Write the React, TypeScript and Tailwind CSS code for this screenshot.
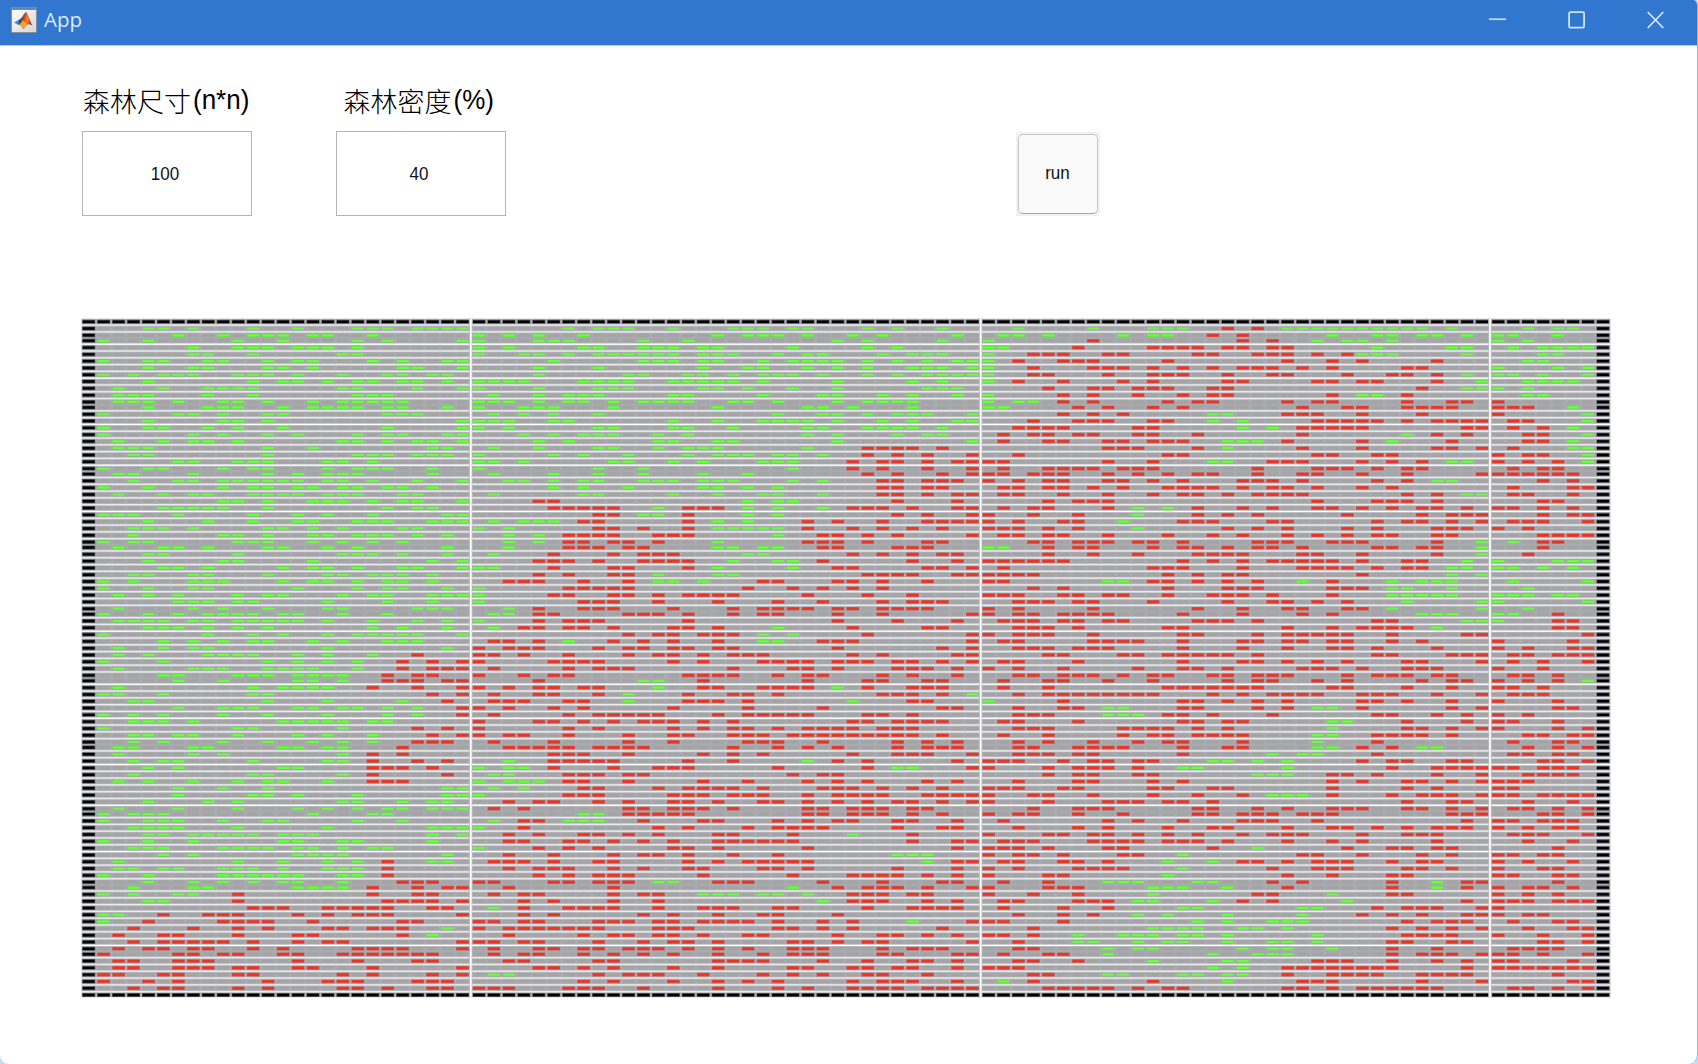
import React from "react";

/*
 * Forest rows. Each row holds four blocks of columns; every character is a
 * base-36 column index inside its block. A block starts with living trees
 * (green) and "/" switches between living and burning (red).
 */
const ROWS: string[] = [
  "457beijkmnop|689adhijlmqsv|27bcd/gi/klmnopqrstv|245",
  "69bcdfgj|0247gijkmprw|1249bc/fh/nqrtuw|014",
  "14adikp|0456beoqv|0/7hj/mopr|02",
  "7abcefgi|0278bcdfglqs|01/6bcdeghjk/qvw|13456",
  "78bhi|034689abcdfghkmnrtuv|0/34589efijkmo/pqrw|34",
  "14589cefjlop|5bcdfgjlmnoqsuwx|0/2567cknpu|23",
  "478cdflmp|48fijmoqtuvx|0/3789bdfhijlnst|046",
  "13567abcehklno|4abefhjklnqsuvwx|0/348bcdgjkorsu/w|0136",
  "4bdegijlmo|0123789adefghjotv|0/259bghmnpqu/x|2345",
  "2589abhimp|0489afgilouvw|/478abcfgt/wx|02",
  "2348bijk|14678dejnortw|0/57adfgn/pq/s|23",
  "23469acfhijkl|0124679bcdehikoqrst|023/57cefkmnsvw|/0",
  "489adfghiklo|03459gmnpt|01/68bdlopstuv|/012/5",
  "1679cdklm|1358knoqstux|/579/fg/klmpt|/0/6",
  "49acp|01256dgjklmortwx|/3678bc/fh/mnopqsuvwx|/12/6",
  "1458adkp|0289dehmnqrstv|/2345ab/hj/lmnopwx|/13/5",
  "179ceiklop|35789cemosuv|/13467abel/s/uw|/23/6",
  "2578ahikmnp|46cdghox|/14589bcd/ghi/kp/r/v|/23/5",
  "234cfno|1489cefgm/qrstv|/89ae/g/lpuvx|/1/56",
  "34cijkmno|057aeghikln/qsux|/2cdmnqr|/023/6",
  "67abcghj|0139adfjkl/prsuwx|/018b/fg/jklprt/vw|/024/6",
  "1459bcgijkn|08bl/prux|/145679abimnoqst|/134",
  "237ceghin|158bfi/qsvx|/013458acefilmpsx|/012345",
  "3679abcdeghjmp|23578bcdfghln/rsuvw|/024589bdhijlqs/uv|/35",
  "149bcefhikln|57afgik/rsuv|/124579cdefhjkmpr|/156",
  "2578bcdeghilm|178dgjkn/rsuwx|/1258bdegijklsu/wx|/125",
  "9acfghjlmp|/45/ikl/sw|/4678mqrsu|/34",
  "56789ckmn|/56789/c/efg/ikn/pqrtwx|/1348/ac/ehjmnprtuw|/0135",
  "1236begjop|/89/bc/e/ik/sux|/036/a/egiotvwx|/356",
  "48befijknop|1345/78e/gi/moruvwx|/0256/9/defjkqstvx|/1236",
  "3457cdfhlm|02/89be/ghijk/mprtv|/01246/a/gikoquvw|/02",
  "39acfgijkmo|24/6789cde/k/noqsx|/12458cfhkmoqruv|/3456",
  "134abcfhjl|24/679ac/g/mnoquv|/34678abdijknopu/x|1/34",
  "2568cdgio|2/678ab/ghjk/nostu|01/467bdegijlqrtu/x|/3",
  "45ahijlo|1/59bcd/ij/prtvw|/47aefghlmpu/x|/2",
  "49afnp|/4568bcde/hkl/ntw|/012345dfhjklmnpst/w|0456",
  "568dfgilmp|01/59ae/gl/opuvx|/1bcdhlmnoqst/vw|0135",
  "3478cghjkln|/469a/cgh/qrstwx|/0123ceghp/vx|",
  "13789dfgikln|/2347a/cdf/jkopru|/01/89/bcegi/l/n/rtuv|16",
  "1478eiklo|0/6789ailnpr|/35cghinop/rsv|2",
  "246acdhjknop|0/569acefghmqt|/0125689cfghjn/rstuv|01245",
  "678abgkn|0/789cgknrtuv|/23467bgjkmo/sx|06",
  "279cghmno|2/4789dhjklmoprstu|/027ehklop/rx|2",
  "14689abdehk|12/45abcehjkorx|/0235678dhln/tuv|01/4",
  "234578abcdegjmo|0/4678eosw|/1235689efgiqr/wx|0/45",
  "4568acjlo|1/34679deg/k/puv|/2346cdknpqrs/u|/45",
  "18bdgijklmp|/acdfgh/jl/qx|/02347deiklmnorwx|/6",
  "579bcfhklm|/124/6/9bdg/jk/nopx|/12789adhiklnort|/05",
  "2578go|/02348abdeghovx|/234678dhknoqu|/0256",
  "2489abegj/m|/0136acdfhijprwx|/459acdefgiqrvwx|/12456",
  "15cegi/lnp|/05678dfjklmopqstvx|/126dhikmostx|/136",
  "2789cdefi/lnop|/1689ahlmostuw|/025adeglmnpstu|/03",
  "56abcefgh/kmn|/0356efghkmnrtw|/235679bcfgijkoqrsuv|/124",
  "69efh/klmop|/4/bc/fmqruv|/1458bgijmotvw|/024/6",
  "2bdefg/jmp|/024578/c/fgjklm/o/qtuv|/14cdefghinosv|/013",
  "125bc/np|/1458/a/ehikrstv/x|/2456789abfhjklmpqrux|/123",
  "34cgl/o|/12367/a/efgi/p/tu|0/5degikpqsv|/04",
  "69abefhikm/p|/0257dinvw|/256/89/deik/mn/pvx|/45",
  "1359cgkm/p|/1689abcgijklmqrt|/234/89a/cdfjqruw|/02",
  "3457defghjk|/04579bcdfhpqstuv|/126degh/no/sw|/014",
  "1abh/mo|/068dfhikmnoprst|/2349abceg/n/stvx|/046",
  "3467aegj/np|/0236adehijlmnopqrstv|/149bcefgh/mn/qrstv|/2356",
  "359cfhj/mno|/15adijknsuw|/247acdh/m/q|/145",
  "2378degh/l|/2345689abhkmosuvw|/236789dgh/mn/pr/tu|/246",
  "279h/jl|/567afhjpstux|/23467d/jlm/q|/1245",
  "356bgh/jmo|2/56789eh/m/oqw|/012578ab/fgik/prsvw|/346",
  "46de/jkln|023/59cdekq/st/x|/04678a/dek/ruvwx|/01345",
  "3bch/jo|12/678ablno|/467ab/ijk/noqux|/2345",
  "247acdg/jkl|0234/67afimoquw|/267bdnpstvx|/012",
  "69cop|13/78cefghjnoprtv|/01256bcfgnsu|/01",
  "6bceiop|0/678defhijmopqruvwx|/0347beh/jkl/nrtuvx|/013456",
  "48ahilno|/2458adegjkmoqstvx|/0489acdfsvw|/25",
  "26aegiklnop|/13abdefhmnpqrtu|/3678efiknopstvx|/1246",
  "1345fjk|78/abcdemnpqrtv|/02369efhijlmnvwx|/346",
  "14569cdil|1/34/678/bfgkmopstw|/18adhijmw|/01345",
  "3456agnop|0/3ceiklmnsvw|/268cfgknoqsuvw|/0245",
  "45789abdefnp|/2478acghl/p/t|/04578acehjklpstu|/1236",
  "147dehin|/23679bdghijkltwx|/123789acdegknpu|/25",
  "3459abcefhjk|0/468degmw|/012489f/i/orsuv|/4",
  "57efgho|/259bcehk/stu|/02359a/d/lmptv|/0134",
  "2adgi/k/no|/123589egijklm/u/wx|/12568/cf/hikmnortu|/025",
  "23569abdghi/k|/24569befjkmsw|/026789/d/jmnostv|/034",
  "149abcdehi/k|/4689aflpqrsuw|/045/c/knrs|/0145",
  "479bdeh/lmn|/015689a/cd/ghinrvw|/14/89aef/jlr/u/wx|/4",
  "378efgh/jmop|/29/l/oqrsux|/0456/bcdg/kr/u/w|/0235",
  "1367/ajmn|/1349bc/fghjkm/pqrtu|/036/b/ij/n/rs|/024",
  "45/aklmnp|/359c/n/pqruw|/12678/abf/hj/o/w|/012456",
  "/bcdghijkno|1/36789cfghklqtuvw|/158/delm/qstux|/0",
  "12/589aegijkp|/35bdgjko|/257/acgl/prtwx|/023",
  "1/49abcflm|/013489acdfghiknp/t/x|/015/egjkl/suvw|/145",
  "/37acghjkl/o|/02345678cdeklnpv|/3/bcdehik/rtvx|/256",
  "/256aefl/n|/279acdfijorsuw|/013/69abdegm/stuv|/036",
  "/356789beghp|/01348bdeglmoqrx|/2/67acdgjkm/rsvw|/346",
  "/24578bdijklp|/14578abcegilmnrtuv|/23/8abhjkn/ru|/1234",
  "/1679adehijklmn|/13479bdgjlmnrswx|/145/8fijk/rtuvx|/0136",
  "/23678eimn|/2389ghijnqtuw|/236/bgh/mnoruw|/015",
  "/23678abefjp|/4579dglmpqstw|/012/fh/klmnopqrw|/0123456",
  "/1256abhjnp|12/8abcfjlnqru|/34/89degh/knopqtuvw|/4",
  "/146cghimno|/79dgikprstw|1/3b/g/lmntx|/56",
  "/356achikno|/012678bgkmpqrsuvwx|/45678acdklnpqrstu|/1246",
];

const LEFT = 81;
const TOP = 318;
const WIDTH = 1530;
const HEIGHT = 680;
const PITCH = 14.952;
const BLOCKS = [
  { x: 88.7 - LEFT, count: 26 },
  { x: 479 - LEFT, count: 34 },
  { x: 988.6 - LEFT, count: 34 },
  { x: 1498.3 - LEFT, count: 8 },
];
const SEAMS = [470.8 - LEFT, 980.7 - LEFT, 1490 - LEFT];
const TIGHT = [2, 12, 22, 33, 43, 53, 63, 73, 84, 94];
const BRIGHT = [3, 8, 15, 21, 28, 46, 54, 59, 66, 72, 79, 93];

const rowY: number[] = [321.7 - TOP];
for (let r = 0; r < 101; r++) rowY.push(rowY[r] + (TIGHT.includes(r) ? 5.5 : 6.795));

const cell = (x: number, y: number, w: number, h: number) =>
  `M${(x - w / 2).toFixed(2)} ${(y - h / 2).toFixed(2)}h${w}v${h}h${-w}z`;

function buildPaths() {
  const all: number[] = BLOCKS.flatMap((b) => Array.from({ length: b.count }, (_, i) => b.x + i * PITCH));
  const out = { empty: "", green: "", greenCore: "", red: "", redCore: "", wall: "", wallCore: "" };
  const wall = (x: number, y: number) => {
    out.wall += cell(x, y, 13, 4);
    out.wallCore += cell(x, y, 11.8, 2.4);
  };
  rowY.forEach((y, r) => {
    if (r === 0 || r === 101) {
      all.forEach((x) => wall(x, y));
      return;
    }
    wall(all[0], y);
    wall(all[101], y);
    all.slice(1, 101).forEach((x) => {
      out.empty += cell(x, y, 11.4, 3);
    });
    ROWS[r - 1].split("|").forEach((codes, b) => {
      let burning = false;
      for (const c of codes) {
        if (c === "/") {
          burning = !burning;
          continue;
        }
        const x = BLOCKS[b].x + parseInt(c, 36) * PITCH;
        if (burning) {
          out.red += cell(x, y, 12.8, 3.6);
          out.redCore += cell(x, y, 11.6, 2.3);
        } else {
          out.green += cell(x, y, 12.4, 3.2);
          out.greenCore += cell(x, y, 11.6, 2.2);
        }
      }
    });
  });
  return out;
}

const PATHS = buildPaths();

function ForestMap() {
  return (
    <svg className="block" width={WIDTH} height={HEIGHT} viewBox={`0 0 ${WIDTH} ${HEIGHT}`}>
      <rect x="0" y="0.4" width={WIDTH} height={HEIGHT - 0.8} fill="#dcdce0" />
      <rect x="1" y="1.2" width={WIDTH - 2} height={HEIGHT - 2.4} fill="#a9aaaf" />
      {rowY.slice(0, -1).map((y, r) => {
        if (TIGHT.includes(r)) return null;
        const mid = (y + rowY[r + 1]) / 2;
        return (
          <g key={r}>
            <rect x="1" y={mid - 1.3} width={WIDTH - 2} height="2.6" fill="#bcbdc1" />
            <rect x="0" y={mid - 0.65} width={WIDTH} height="1.3" fill={BRIGHT.includes(r) ? "#ffffff" : "#ececef"} />
          </g>
        );
      })}
      <path d={PATHS.empty} fill="#a4a4a5" />
      <path d={PATHS.wall} fill="#5a5b60" />
      <path d={PATHS.wallCore} fill="#000000" />
      <path d={PATHS.green} fill="#6fd455" />
      <path d={PATHS.greenCore} fill="#6cfb43" />
      <path d={PATHS.red} fill="#c4625e" />
      <path d={PATHS.redCore} fill="#ea3323" />
      {SEAMS.map((x) => (
        <g key={x}>
          <rect x={x - 1.5} y="0.4" width="3" height={HEIGHT - 0.8} fill="#c2c2c6" />
          <rect x={x - 0.8} y="0.4" width="1.6" height={HEIGHT - 0.8} fill="#ffffff" />
        </g>
      ))}
    </svg>
  );
}

function MatlabIcon() {
  return (
    <svg className="block" width="26" height="26" viewBox="0 0 26 26">
      <defs>
        <linearGradient id="tile" x1="0" y1="0" x2="1" y2="1">
          <stop offset="0" stopColor="#ffffff" />
          <stop offset="1" stopColor="#d4d4d4" />
        </linearGradient>
        <linearGradient id="flame" x1="0" y1="0" x2="1" y2="0.3">
          <stop offset="0" stopColor="#6b2418" />
          <stop offset="0.45" stopColor="#c9411b" />
          <stop offset="0.7" stopColor="#f08a2c" />
          <stop offset="1" stopColor="#a52a14" />
        </linearGradient>
      </defs>
      <rect x="0.5" y="0.5" width="25" height="25" fill="url(#tile)" stroke="#85898e" strokeWidth="0.8" />
      <rect x="0.5" y="0.5" width="25" height="2.4" fill="#5b86b4" />
      <path d="M3 15.400 8 12.800l3 1.200-3.400 4z" fill="#3b8ec4" />
      <path d="M8 12.800c3-1.200 4.200-5.300 7-7.800L11 14.500 7.600 18z" fill="#24507c" />
      <path d="M7.600 17.600c3.200-1.200 4.700-10 7.400-12.600 2.300 1.500 4 9.500 6.400 13.800-2.400-1.400-3.900-2-5.300-.8-1.600 1.300-2.600 3.600-4 4.200-.7-1.900-2.100-4.100-4.500-4.600z" fill="url(#flame)" />
      <path d="M12.100 22.200c-.7-1.900-2.100-4.100-4.500-4.600 1.800-.4 3.200-2.400 4.300-4.400 1.800 1.300 3 2.800 3.600 5.300-1.200 1.300-2.100 3.200-3.400 3.700z" fill="#f2a136" />
    </svg>
  );
}

function TitleBar() {
  return (
    <header className="flex h-[46px] items-start justify-between border-b border-[#a9cbee] bg-[#3277cf] pl-[11px] pr-[33px]">
      <div className="flex pt-[7px]">
        <MatlabIcon />
        <span className="-mt-px ml-[7px] font-['Open_Sans',sans-serif] text-[20.5px] leading-[27px] text-[#dceafa]">App</span>
      </div>
      <div className="flex gap-[62px] pt-[11px]">
        <svg width="17" height="18" viewBox="0 0 17 18" stroke="#b9d6f5" strokeWidth="1.8">
          <path d="M0 8.200h17" />
        </svg>
        <svg width="17" height="18" viewBox="0 0 17 18" fill="none" stroke="#cfe3f8" strokeWidth="1.8">
          <rect x="1.100" y="1.100" width="15" height="15.600" rx="1.500" />
        </svg>
        <svg width="17" height="18" viewBox="0 0 17 18" stroke="#d8e8fa" strokeWidth="1.7">
          <path d="M.7 1l15.600 16M16.300 1L.7 17" />
        </svg>
      </div>
    </header>
  );
}

function Field({ title, unit, value, inset }: { title: string; unit: string; value: string; inset: string }) {
  return (
    <div className="flex w-[170px] flex-col">
      <div className={`${inset} flex h-[49px] whitespace-nowrap leading-[38px] text-black`}>
        <span className="font-['Noto_Sans_CJK_TC','Noto_Sans_CJK_SC',sans-serif] text-[27px] font-light">{title}</span>
        <span className="-mt-px origin-center scale-y-[1.06] pl-[2px] font-['Liberation_Sans',sans-serif] text-[26px]">{unit}</span>
      </div>
      <div className="flex h-[85px] w-[170px] items-center justify-center border-[1.5px] border-[#b3b3b9] bg-white pr-[3px]">
        <span className="scale-y-[1.12] font-['Liberation_Sans',sans-serif] text-[17px] leading-5 text-[#111]">{value}</span>
      </div>
    </div>
  );
}

export default function App() {
  return (
    <div className="h-[1064px] w-[1698px] overflow-hidden bg-[#c9dcf0]">
      <div className="flex h-full w-full flex-col overflow-hidden rounded-b-[9px] rounded-tr-[5px] border-r border-[#8db8e5] bg-white">
        <TitleBar />
        <main className="flex flex-col pl-[81.5px]">
          <section className="flex pt-9">
            <Field title="森林尺寸" unit="(n*n)" value="100" inset="pl-[1.5px]" />
            <div className="ml-[84px]">
              <Field title="森林密度" unit="(%)" value="40" inset="pl-[8px]" />
            </div>
            <div className="ml-[510px] mt-[49.5px] h-[84px] w-[84px] bg-[#f1f1f1] p-[2px]">
              <button className="h-[80px] w-[80px] rounded-[5px] border border-[#c6c6c6] border-b-[#a5a5a5] bg-[#fafafa] font-['Liberation_Sans',sans-serif] text-[17px] text-[#111]">
                <span className="inline-block scale-y-[1.08]">run</span>
              </button>
            </div>
          </section>
          <section className="-ml-[0.5px] pt-[102px]">
            <ForestMap />
          </section>
        </main>
      </div>
    </div>
  );
}
